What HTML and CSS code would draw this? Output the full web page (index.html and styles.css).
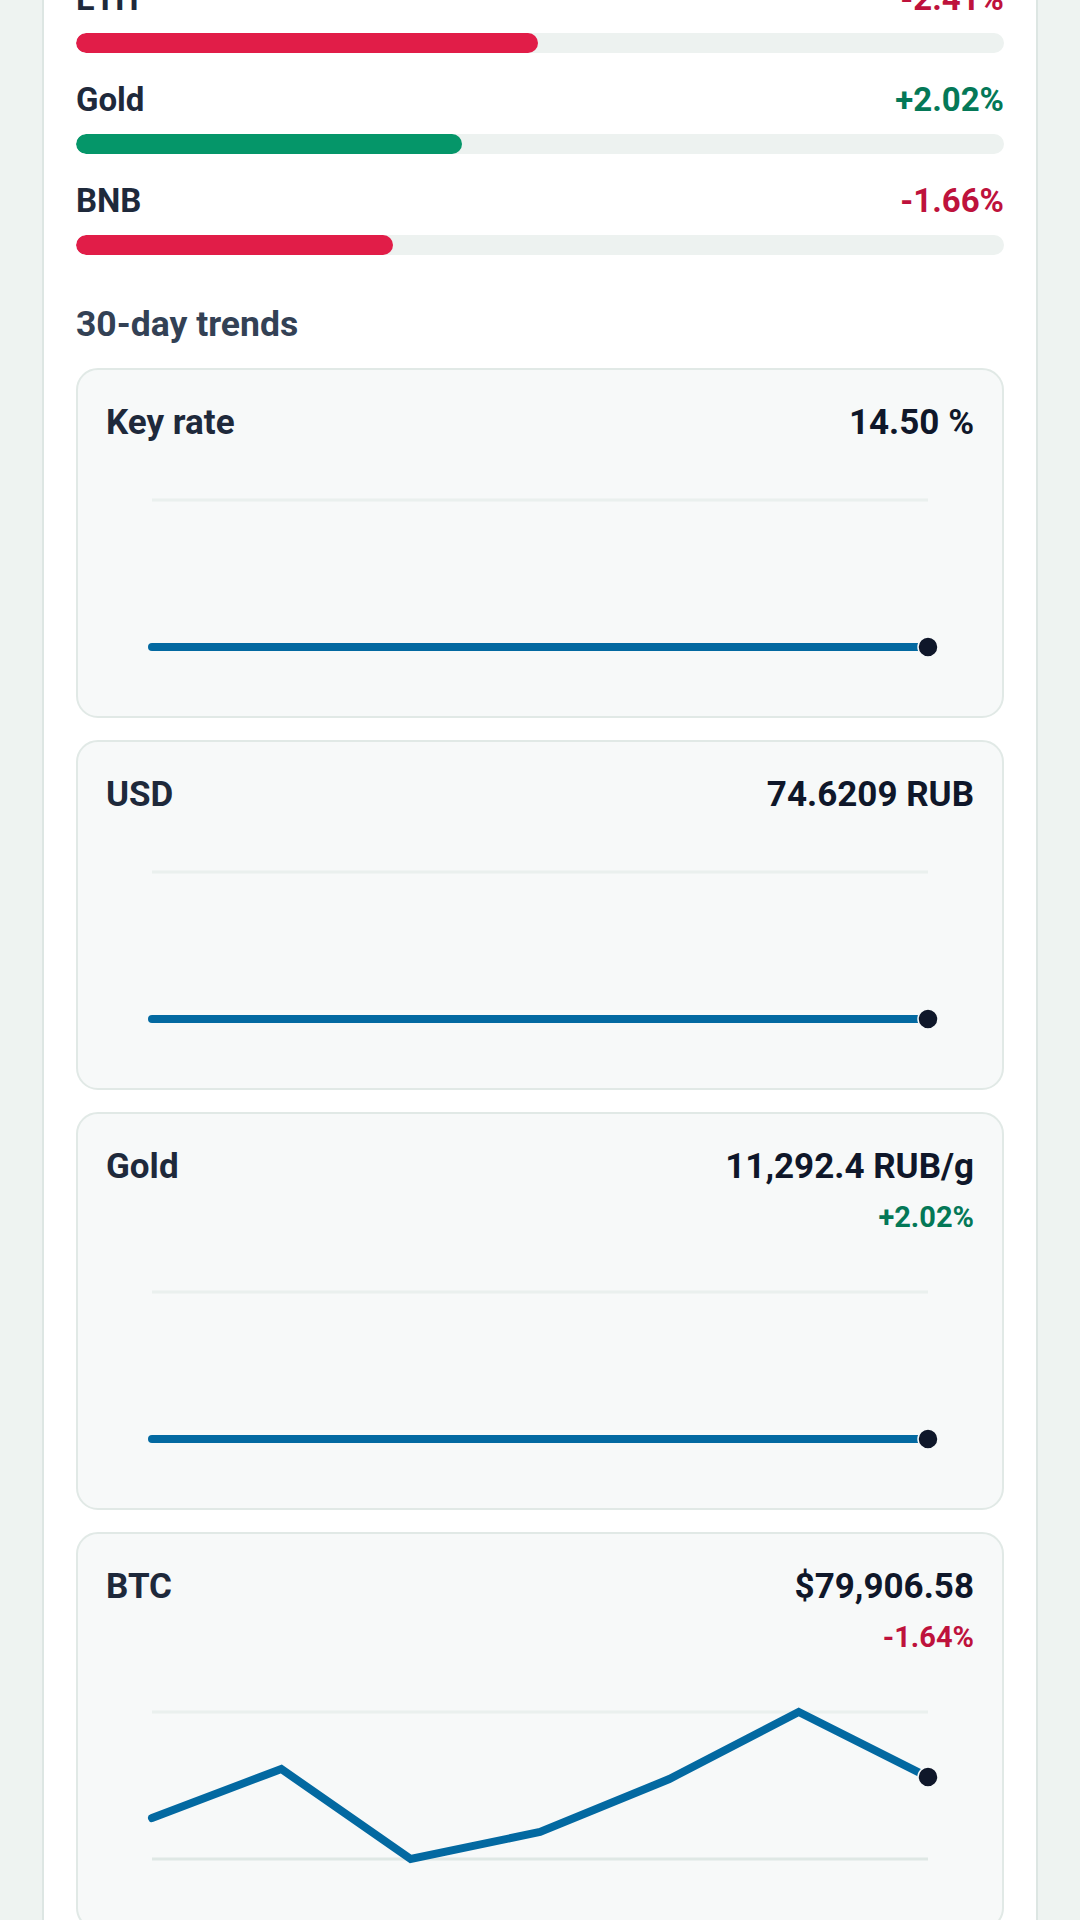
FILE: index.html
```html
<!DOCTYPE html>
<html lang="en">
<head>
<meta charset="utf-8">
<link rel="stylesheet" href="styles.css">
</head>
<body>
<main class="panel">
  <section class="movers">
    <div class="mover">
      <div class="mover-head"><span class="mover-name">ETH</span><span class="pct neg">-2.41%</span></div>
      <div class="track"><div class="fill fill-neg" style="width:49.8%"></div></div>
    </div>
    <div class="mover">
      <div class="mover-head"><span class="mover-name">Gold</span><span class="pct pos">+2.02%</span></div>
      <div class="track"><div class="fill fill-pos" style="width:41.6%"></div></div>
    </div>
    <div class="mover">
      <div class="mover-head"><span class="mover-name">BNB</span><span class="pct neg">-1.66%</span></div>
      <div class="track"><div class="fill fill-neg" style="width:34.2%"></div></div>
    </div>
  </section>

  <h2 class="section-title">30-day trends</h2>

  <section class="trends">
    <article class="trend">
      <header class="trend-head"><span class="trend-name">Key rate</span><span class="trend-value">14.50 %</span></header>
      <svg class="chart" viewBox="0 0 868 245" width="868" height="245">
        <line class="grid-top" x1="46" y1="58" x2="822" y2="58"/>
        <line class="grid-bottom" x1="46" y1="205" x2="822" y2="205"/>
        <polyline class="series" points="46,205 822,205"/>
        <circle class="dot" cx="822" cy="205" r="10"/>
      </svg>
    </article>

    <article class="trend">
      <header class="trend-head"><span class="trend-name">USD</span><span class="trend-value">74.6209 RUB</span></header>
      <svg class="chart" viewBox="0 0 868 245" width="868" height="245">
        <line class="grid-top" x1="46" y1="58" x2="822" y2="58"/>
        <line class="grid-bottom" x1="46" y1="205" x2="822" y2="205"/>
        <polyline class="series" points="46,205 822,205"/>
        <circle class="dot" cx="822" cy="205" r="10"/>
      </svg>
    </article>

    <article class="trend">
      <header class="trend-head"><span class="trend-name">Gold</span><span class="trend-value">11,292.4 RUB/g</span></header>
      <div class="trend-change pos">+2.02%</div>
      <svg class="chart" viewBox="0 0 868 245" width="868" height="245">
        <line class="grid-top" x1="46" y1="58" x2="822" y2="58"/>
        <line class="grid-bottom" x1="46" y1="205" x2="822" y2="205"/>
        <polyline class="series" points="46,205 822,205"/>
        <circle class="dot" cx="822" cy="205" r="10"/>
      </svg>
    </article>

    <article class="trend">
      <header class="trend-head"><span class="trend-name">BTC</span><span class="trend-value">$79,906.58</span></header>
      <div class="trend-change neg">-1.64%</div>
      <svg class="chart" viewBox="0 0 868 245" width="868" height="245">
        <line class="grid-top" x1="46" y1="58" x2="822" y2="58"/>
        <line class="grid-bottom" x1="46" y1="205" x2="822" y2="205"/>
        <polyline class="series" points="46,164 175.3,115 304.7,205 434,178 563.3,125 692.7,58 822,123"/>
        <circle class="dot" cx="822" cy="123" r="10"/>
      </svg>
    </article>
  </section>
</main>
</body>
</html>
```

FILE: styles.css
```css
html, body {
  margin: 0;
  padding: 0;
}
body {
  background: #eef3f1;
  font-family: Roboto, "Noto Sans", "Liberation Sans", sans-serif;
  height: 1920px;
  overflow: hidden;
}
.panel {
  margin: -62px 42px 0;
  background: #ffffff;
  border: 2px solid #dde6e3;
  border-radius: 22px;
  padding: 41px 32px 80px;
}
.movers {
  display: flex;
  flex-direction: column;
  gap: 29px;
}
.mover-head {
  display: flex;
  justify-content: space-between;
  align-items: center;
  height: 36px;
  margin-bottom: 16px;
}
.mover-name {
  font-size: 33px;
  line-height: 36px;
  font-weight: 700;
  color: #1e293b;
}
.pct {
  font-size: 33px;
  line-height: 36px;
  font-weight: 700;
}
.neg { color: #be123c; }
.pos { color: #047857; }
.track {
  height: 20px;
  border-radius: 10px;
  background: #edf2f0;
  overflow: hidden;
}
.fill {
  height: 100%;
  border-radius: 10px;
}
.fill-neg { background: #e11d48; }
.fill-pos { background: #059669; }

.section-title {
  margin: 49px 0 24px;
  font-size: 35.5px;
  line-height: 40px;
  font-weight: 700;
  color: #334155;
}
.trends {
  display: flex;
  flex-direction: column;
  gap: 22px;
}
.trend {
  background: #f7f9f9;
  border: 2px solid #e1e9e6;
  border-radius: 22px;
  padding: 28px 28px 29px;
}
.trend-head {
  display: flex;
  justify-content: space-between;
  align-items: flex-start;
  height: 44px;
}
.trend-name {
  font-size: 35px;
  line-height: 50px;
  font-weight: 700;
  color: #1e293b;
}
.trend-value {
  font-size: 35px;
  line-height: 50px;
  font-weight: 700;
  color: #0f172a;
}
.trend-change {
  margin-top: 14px;
  text-align: right;
  font-size: 29px;
  line-height: 34px;
  font-weight: 700;
}
.chart {
  display: block;
  width: 868px;
  height: 245px;
}
.grid-top {
  stroke: #eaf0ee;
  stroke-width: 3;
}
.grid-bottom {
  stroke: #dfe8e5;
  stroke-width: 3;
}
.series {
  fill: none;
  stroke: #0369a1;
  stroke-width: 8;
  stroke-linecap: round;
  stroke-linejoin: miter;
}
.dot {
  fill: #0f172a;
  stroke: #f7f9f9;
  stroke-width: 1.5;
}
```
